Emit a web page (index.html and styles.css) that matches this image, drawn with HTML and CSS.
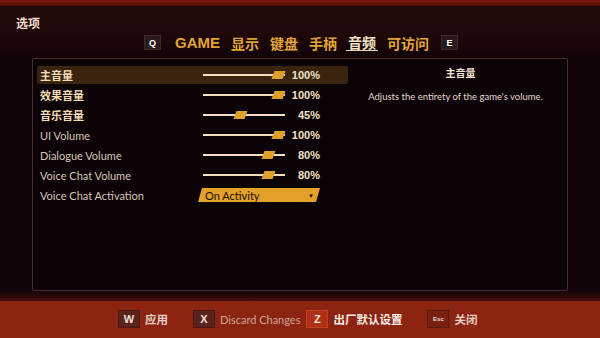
FILE: index.html
```html
<!DOCTYPE html>
<html lang="zh">
<head>
<meta charset="utf-8">
<link rel="stylesheet" href="styles.css">
</head>
<body>
<div class="screen">
  <div class="topbar"></div>
  <div class="title">选项</div>
  <div class="tabs">
    <span class="key">Q</span>
    <span class="tab game">GAME</span>
    <span class="tab">显示</span>
    <span class="tab">键盘</span>
    <span class="tab">手柄</span>
    <span class="tab active">音频</span>
    <span class="tab">可访问</span>
    <span class="key">E</span>
  </div>
  <div class="panel">
    <div class="list">
      <div class="row selected">
        <span class="label cn">主音量</span>
        <span class="slider"><span class="track"></span><span class="thumb" style="left:70px"></span></span>
        <span class="value">100%</span>
      </div>
      <div class="row">
        <span class="label cn">效果音量</span>
        <span class="slider"><span class="track"></span><span class="thumb" style="left:70px"></span></span>
        <span class="value">100%</span>
      </div>
      <div class="row">
        <span class="label cn">音乐音量</span>
        <span class="slider"><span class="track"></span><span class="thumb" style="left:32px"></span></span>
        <span class="value">45%</span>
      </div>
      <div class="row">
        <span class="label">UI Volume</span>
        <span class="slider"><span class="track"></span><span class="thumb" style="left:70px"></span></span>
        <span class="value">100%</span>
      </div>
      <div class="row">
        <span class="label">Dialogue Volume</span>
        <span class="slider"><span class="track"></span><span class="thumb" style="left:60px"></span></span>
        <span class="value">80%</span>
      </div>
      <div class="row">
        <span class="label">Voice Chat Volume</span>
        <span class="slider"><span class="track"></span><span class="thumb" style="left:60px"></span></span>
        <span class="value">80%</span>
      </div>
      <div class="row">
        <span class="label">Voice Chat Activation</span>
        <span class="dropdown"><span>On Activity</span><span class="arrow">▼</span></span>
      </div>
    </div>
    <div class="desc">
      <div class="desc-title">主音量</div>
      <div class="desc-text">Adjusts the entirety of the game's volume.</div>
    </div>
  </div>
  <div class="footer">
    <div class="band"></div>
    <div class="actions">
      <span class="act"><span class="fkey">W</span><span class="flabel">应用</span></span>
      <span class="act"><span class="fkey">X</span><span class="flabel en">Discard Changes</span></span>
      <span class="act tight"><span class="fkey hot">Z</span><span class="flabel strong">出厂默认设置</span></span>
      <span class="act"><span class="fkey esc">Esc</span><span class="flabel">关闭</span></span>
    </div>
  </div>
</div>
</body>
</html>
```

FILE: styles.css
```css
* { box-sizing: border-box; }
html, body { margin: 0; padding: 0; }
body {
  width: 600px;
  height: 338px;
  overflow: hidden;
  background: #120407;
  font-family: "Noto Sans CJK SC", "Lato", sans-serif;
}
.screen {
  width: 600px;
  height: 338px;
  display: flex;
  flex-direction: column;
  background: linear-gradient(#220a0a 0px, #1e0809 36px, #120407 56px, #120407 100%);
}
.topbar {
  height: 6px;
  background: linear-gradient(#7a1a0c, #4a0e08);
}
.title {
  height: 24px;
  padding: 9px 0 0 16px;
  font-size: 12px;
  line-height: 16px;
  font-weight: 700;
  color: #f0dcc8;
}
.tabs {
  height: 22px;
  padding-top: 3px;
  display: flex;
  justify-content: center;
  align-items: center;
  gap: 11px;
  padding-left: 2px;
}
.key {
  width: 17px;
  height: 15px;
  background: #2a1a1a;
  border: 1px solid #3e2c2a;
  color: #ffffff;
  font-family: "Liberation Sans", sans-serif;
  font-size: 9px;
  font-weight: 700;
  display: flex;
  align-items: center;
  justify-content: center;
}
.tabs .key:first-child { margin-right: 3px; }
.tabs .key:last-child { margin-left: 1px; }
.tab {
  font-size: 14px;
  font-weight: 700;
  color: #e2a437;
  line-height: 18px;
}
.tab.game {
  font-family: "Liberation Sans", sans-serif;
  font-size: 15px;
}
.tab.active {
  color: #f4e4c4;
  border-bottom: 1px solid #e8d4b0;
  line-height: 16px;
  padding: 0 2px;
  margin: 0 -2px;
}
.panel {
  margin: 6px 32px 0 32px;
  height: 233px;
  border: 1px solid #4a2c2c;
  border-radius: 2px;
  background: #0c0306;
  display: flex;
  padding: 7px 4px;
}
.list {
  width: 311px;
  display: flex;
  flex-direction: column;
}
.row {
  height: 20px;
  display: flex;
  align-items: center;
}
.row.selected {
  background: #3a2410;
  border-radius: 2px;
  height: 18px;
  margin-bottom: 1px;
}
.label {
  width: 161px;
  padding-left: 3px;
  font-family: "Lato", sans-serif;
  font-size: 11px;
  color: #d6c6b6;
}
.label.cn {
  font-family: "Noto Sans CJK SC", sans-serif;
  font-weight: 700;
  color: #f2dcb4;
}
.slider {
  position: relative;
  width: 82px;
  height: 10px;
  margin-left: 5px;
}
.track {
  position: absolute;
  left: 0;
  right: 0;
  top: 4px;
  height: 2px;
  background: #f0e0c0;
}
.thumb {
  position: absolute;
  top: 1px;
  width: 11px;
  height: 8px;
  background: #e0a12a;
  transform: skewX(-20deg);
}
.value {
  width: 35px;
  text-align: right;
  font-family: "Liberation Sans", sans-serif;
  font-weight: 700;
  font-size: 11px;
  color: #f2e2c4;
}
.dropdown {
  width: 122px;
  height: 14px;
  background: #e3a128;
  clip-path: polygon(4px 0, 100% 0, calc(100% - 4px) 100%, 0 100%);
  display: flex;
  align-items: center;
  justify-content: space-between;
  padding: 0 6px 0 7px;
  font-family: "Lato", sans-serif;
  font-size: 11px;
  color: #1a0c04;
}
.arrow {
  font-size: 6px;
  color: #1a0c04;
}
.desc {
  flex: 1;
  display: flex;
  flex-direction: column;
  align-items: center;
}
.desc-title {
  font-size: 10px;
  font-weight: 700;
  color: #f2e4d0;
  line-height: 14px;
  margin-left: 10px;
}
.desc-text {
  margin-top: 11px;
  font-family: "Lato", sans-serif;
  font-size: 9.5px;
  color: #e2d6cc;
}
.footer {
  flex: 1;
  display: flex;
  flex-direction: column;
  margin-top: 1px;
}
.band {
  height: 9px;
  background: linear-gradient(#1a0507, #2a0808 50%, #4a100a);
}
.actions {
  flex: 1;
  background: #8b2511;
  display: flex;
  align-items: center;
  padding-left: 118px;
  padding-bottom: 1px;
}
.act {
  display: flex;
  align-items: center;
  gap: 5px;
  margin-right: 25px;
}
.act:nth-child(2) { margin-right: 6px; }
.fkey {
  width: 22px;
  height: 18px;
  background: #5a2219;
  border: 1px solid #4a1a12;
  color: #f0e0d8;
  font-family: "Liberation Sans", sans-serif;
  font-weight: 700;
  font-size: 11px;
  display: flex;
  align-items: center;
  justify-content: center;
}
.fkey.hot { background: #ad3018; border-color: #c2401e; }
.fkey.esc { background: #7a2010; border-color: #5e1a10; font-size: 6px; }
.flabel {
  font-size: 11.5px;
  font-weight: 700;
  color: #e8cfc6;
}
.flabel.en {
  font-family: "Lato", sans-serif;
  font-weight: 400;
  font-size: 11px;
  color: #d0a49a;
}
.flabel.strong { color: #fbeee6; }
```
